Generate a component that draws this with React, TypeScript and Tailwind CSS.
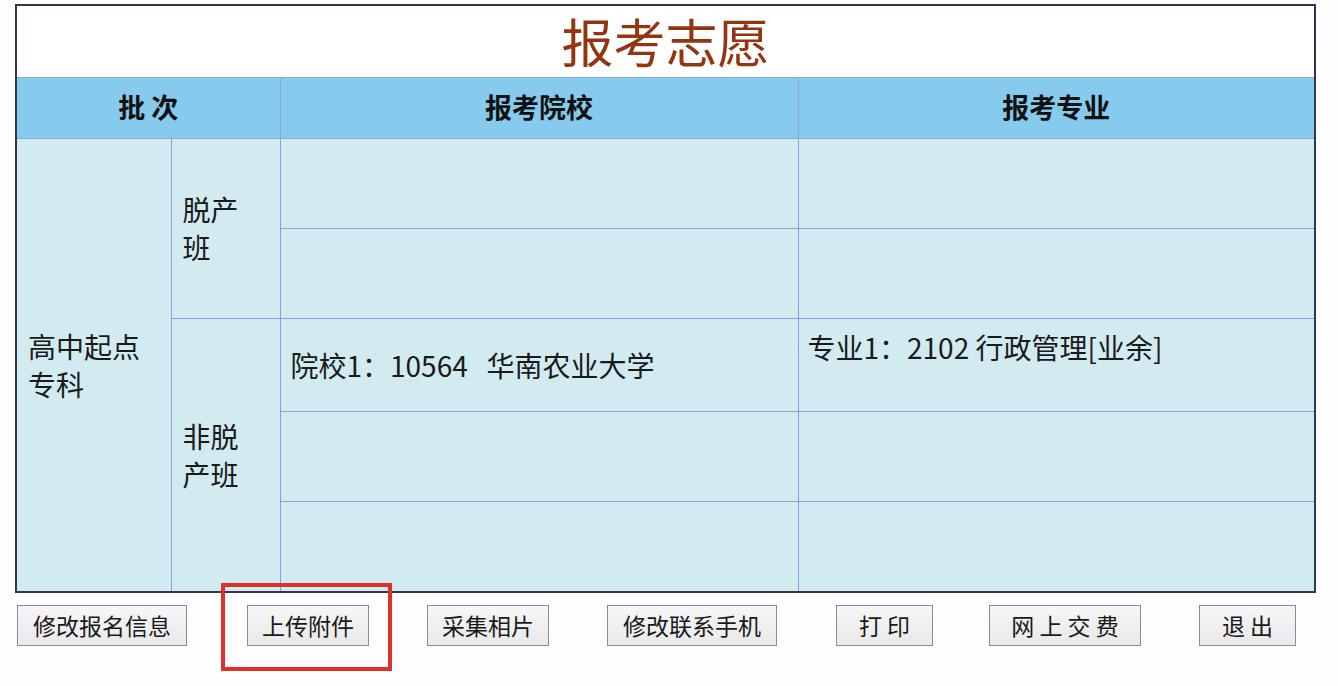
import React from "react";

const font = { fontFamily: '"Noto Sans CJK SC", "Noto Sans", sans-serif' };

const buttons = [
  { label: "修改报名信息", width: "w-[170px]", gap: "" },
  { label: "上传附件", width: "w-[122px]", gap: "ml-[60px]", marked: true },
  { label: "采集相片", width: "w-[122px]", gap: "ml-[58px]" },
  { label: "修改联系手机", width: "w-[170px]", gap: "ml-[58px]" },
  { label: "打 印", width: "w-[97px]", gap: "ml-[59px]" },
  { label: "网 上 交 费", width: "w-[152px]", gap: "ml-[56px]" },
  { label: "退 出", width: "w-[97px]", gap: "ml-[58px]" },
];

const cell = "border border-[#8d9ce4] bg-[#d1ebf1] text-[28px] leading-[38px] text-[#1a1a1a]";

export default function App() {
  return (
    <div className="min-h-[686px] w-[1338px] bg-[#fdfdfd] pt-[4px]" style={font}>
      <table className="ml-[15px] w-[1301px] table-fixed border-collapse border-2 border-[#323650]">
        <colgroup>
          <col className="w-[155px]" />
          <col className="w-[109px]" />
          <col className="w-[518px]" />
          <col />
        </colgroup>
        <tbody>
          <tr className="h-[72px]">
            <td colSpan={4} className="bg-white text-center text-[52px] leading-[60px] text-[#933510]">
              报考志愿
            </td>
          </tr>
          <tr className="h-[61px] bg-[#86cbee] text-[27px] font-bold text-[#111]">
            <td colSpan={2} className="border border-[#8aa8e0] text-center">批 次</td>
            <td className="border border-[#8aa8e0] text-center">报考院校</td>
            <td className="border border-[#8aa8e0] text-center">报考专业</td>
          </tr>
          <tr className="h-[90px]">
            <td rowSpan={5} className={`${cell} px-[11px] align-middle`}>
              <span className="block">高中起点</span>
              <span className="block">专科</span>
            </td>
            <td rowSpan={2} className={`${cell} px-[11px] align-middle`}>
              <span className="block">脱产</span>
              <span className="block">班</span>
            </td>
            <td className={cell}></td>
            <td className={cell}></td>
          </tr>
          <tr className="h-[90px]">
            <td className={cell}></td>
            <td className={cell}></td>
          </tr>
          <tr className="h-[93px]">
            <td rowSpan={3} className={`${cell} px-[11px] align-middle`}>
              <span className="block">非脱</span>
              <span className="block">产班</span>
            </td>
            <td className={`${cell} px-[10px] align-middle whitespace-pre`}>院校1：10564   华南农业大学</td>
            <td className={`${cell} px-[9px] pt-[9px] align-top whitespace-pre`}>专业1：2102 行政管理[业余]</td>
          </tr>
          <tr className="h-[90px]">
            <td className={cell}></td>
            <td className={cell}></td>
          </tr>
          <tr className="h-[91px]">
            <td className={cell}></td>
            <td className={cell}></td>
          </tr>
        </tbody>
      </table>

      <div className="ml-[17px] mt-[12px] flex">
        {buttons.map((b) => (
          <div key={b.label} className={`relative ${b.gap}`}>
            <button
              className={`${b.width} h-[41px] whitespace-pre border border-[#7f8ea8] bg-gradient-to-b from-[#f6f6f6] to-[#e9e9ea] text-center text-[23px] leading-[39px] text-[#1a1a1a]`}
            >
              {b.label}
            </button>
            {b.marked && (
              <div className="pointer-events-none absolute -bottom-[25px] -left-[26px] -right-[23px] -top-[22px] border-4 border-[#e0302c]" />
            )}
          </div>
        ))}
      </div>
    </div>
  );
}
